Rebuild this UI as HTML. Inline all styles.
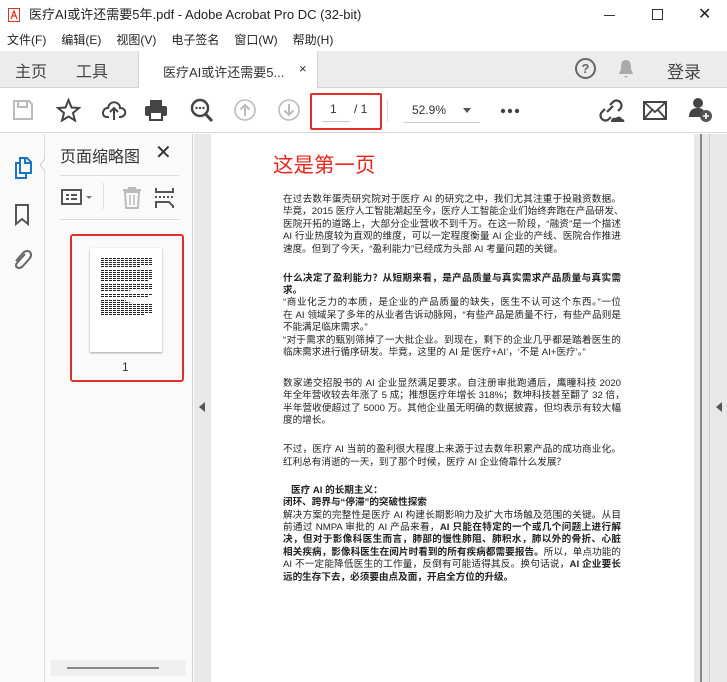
<!DOCTYPE html>
<html><head><meta charset="utf-8"><style>
*{margin:0;padding:0;box-sizing:border-box}
body{width:727px;height:682px;overflow:hidden;background:#fff;font-family:"Liberation Sans","Noto Sans CJK SC",sans-serif;position:relative;color:#222}
.abs{position:absolute}
.title{top:0;left:0;width:727px;height:30px;background:#fff;font-size:13px;line-height:30px}
.menu{top:30px;left:0;width:727px;height:21px;font-size:12px;line-height:21px;background:#fff}
.menu span{margin-left:7px;margin-right:8px}
.tabs{top:51px;left:0;width:727px;height:37px;background:#ececec;border-bottom:1px solid #d6d6d6}
.tb{top:88px;left:0;width:727px;height:45px;background:#fff;border-bottom:1px solid #d8d8d8}
.doc div{font-size:9.6px;line-height:12.4px;color:#222}
.ln{text-align:justify;text-align-last:justify;white-space:nowrap}
</style></head><body>
<div class="abs title">
 <svg class="abs" style="left:8px;top:8px" width="12" height="14"><rect x="0.5" y="0.5" width="11" height="13" fill="#fff" stroke="#d32" /><path d="M3 11 L6 3 L9 11 M4 8 H8" stroke="#d32" fill="none" stroke-width="1.2"/></svg>
 <span class="abs" style="left:29px">医疗AI或许还需要5年.pdf - Adobe Acrobat Pro DC (32-bit)</span>
 <span class="abs" style="left:604px;top:15px;width:11px;height:1px;background:#333"></span>
 <span class="abs" style="left:652px;top:9px;width:11px;height:11px;border:1px solid #333"></span>
 <span class="abs" style="left:698px;font-size:16px;line-height:30px">✕</span>
</div>
<div class="abs menu"><span>文件(F)</span><span>编辑(E)</span><span>视图(V)</span><span>电子签名</span><span>窗口(W)</span><span>帮助(H)</span></div>
<div class="abs tabs">
 <span class="abs" style="left:15px;top:7px;font-size:16px;color:#444">主页</span>
 <span class="abs" style="left:76px;top:7px;font-size:16px;color:#444">工具</span>
 <div class="abs" style="left:138px;top:0;width:180px;height:38px;background:#fff;border-left:1px solid #d6d6d6;border-right:1px solid #d6d6d6"></div>
 <span class="abs" style="left:163px;top:11px;font-size:13px;color:#333">医疗AI或许还需要5...</span>
 <span class="abs" style="left:299px;top:10px;font-size:13px;color:#333">×</span>
 <div class="abs" style="left:575px;top:7px;width:21px;height:21px;border:2px solid #666;border-radius:50%;font-size:13px;text-align:center;line-height:17px;color:#666;font-weight:bold">?</div>
 <svg class="abs" style="left:617px;top:7px" width="18" height="22"><path d="M9 2 C4 2 4 7 4 11 L2 16 H16 L14 11 C14 7 14 2 9 2Z M7 18 H11 L9 20Z" fill="#aaa"/></svg>
 <span class="abs" style="left:667px;top:7px;font-size:17px;color:#444">登录</span>
</div>
<div class="abs tb">
 <svg class="abs" style="left:12px;top:11px" width="22" height="22"><path d="M2 2H17L20 5V20H2Z" fill="none" stroke="#bbb" stroke-width="2"/><rect x="6" y="2" width="9" height="6" fill="none" stroke="#bbb" stroke-width="2"/></svg>
 <svg class="abs" style="left:56px;top:10px" width="25" height="24"><path d="M12.5 2L15.5 9.5L23 10L17 15L19 22.5L12.5 18.5L6 22.5L8 15L2 10L9.5 9.5Z" fill="none" stroke="#444" stroke-width="2"/></svg>
 <svg class="abs" style="left:101px;top:10px" width="26" height="24"><path d="M8 19H6C2 19 1 15 3 12C4 10 6 10 7 10C8 5 12 3 16 5C18 6 19 8 19 10C23 10 25 13 24 16C23 18 21 19 19 19H18" fill="none" stroke="#444" stroke-width="2"/><path d="M13 22V11M9 14L13 10L17 14" fill="none" stroke="#444" stroke-width="2"/></svg>
 <svg class="abs" style="left:144px;top:10px" width="24" height="24"><rect x="6" y="2" width="12" height="6" fill="#444"/><rect x="1" y="8" width="22" height="10" rx="2" fill="#444"/><rect x="6" y="14" width="12" height="8" fill="#fff" stroke="#444" stroke-width="2"/></svg>
 <svg class="abs" style="left:190px;top:10px" width="24" height="26"><circle cx="10" cy="10" r="8" fill="none" stroke="#444" stroke-width="2.5"/><path d="M15.5 16L22 23" stroke="#444" stroke-width="3"/><circle cx="6.5" cy="10" r="1.2" fill="#444"/><circle cx="10" cy="10" r="1.2" fill="#444"/><circle cx="13.5" cy="10" r="1.2" fill="#444"/></svg>
 <svg class="abs" style="left:234px;top:11px" width="22" height="22"><circle cx="11" cy="11" r="10" fill="none" stroke="#bbb" stroke-width="1.6"/><path d="M11 17V6M6.5 10.5L11 6L15.5 10.5" fill="none" stroke="#bbb" stroke-width="2"/></svg>
 <svg class="abs" style="left:278px;top:11px" width="22" height="22"><circle cx="11" cy="11" r="10" fill="none" stroke="#bbb" stroke-width="1.6"/><path d="M11 5V16M6.5 11.5L11 16L15.5 11.5" fill="none" stroke="#bbb" stroke-width="2"/></svg>
 <div class="abs" style="left:310px;top:5px;width:72px;height:37px;border:2px solid #e0302a;border-radius:2px"></div>
 <span class="abs" style="left:330px;top:14px;font-size:12px;color:#333">1</span>
 <span class="abs" style="left:322px;top:33px;width:28px;height:1px;background:#ccc"></span>
 <span class="abs" style="left:354px;top:14px;font-size:12px;color:#333">/ 1</span>
 <span class="abs" style="left:387px;top:12px;width:1px;height:22px;background:#ddd"></span>
 <span class="abs" style="left:412px;top:15px;font-size:12px;color:#333">52.9%</span>
 <span class="abs" style="left:463px;top:20px;border-left:4px solid transparent;border-right:4px solid transparent;border-top:5px solid #555"></span>
 <span class="abs" style="left:404px;top:34px;width:76px;height:1px;background:#ccc"></span>
 <svg class="abs" style="left:500px;top:20px" width="20" height="6"><circle cx="3" cy="3" r="2.2" fill="#444"/><circle cx="10" cy="3" r="2.2" fill="#444"/><circle cx="17" cy="3" r="2.2" fill="#444"/></svg>
 <svg class="abs" style="left:598px;top:10px" width="28" height="26"><path d="M9 14L15 8M7 11L4 14C2 16 2 19 4 21C6 23 9 23 11 21L13 19M12 7L15 4C17 2 20 2 22 4C24 6 24 9 22 11L20 13" fill="none" stroke="#444" stroke-width="2.2"/><path d="M13 24C13 20 16 19 18 20C19 18 23 18 24 21C26 21 27 23 26 24Z" fill="#444"/></svg>
 <svg class="abs" style="left:643px;top:13px" width="24" height="19"><rect x="1" y="1" width="22" height="17" fill="none" stroke="#444" stroke-width="2"/><path d="M1 1L12 11L23 1M1 18L9 9M23 18L15 9" fill="none" stroke="#444" stroke-width="1.8"/></svg>
 <svg class="abs" style="left:688px;top:9px" width="26" height="26"><circle cx="10" cy="6" r="5" fill="#444"/><path d="M1 20C1 13 5 11 10 11C13 11 15 12 16 14V20Z" fill="#444"/><circle cx="18" cy="19" r="6" fill="#555"/><path d="M18 16V22M15 19H21" stroke="#fff" stroke-width="1.6"/></svg>
</div>
<div class="abs" style="left:0;top:134px;width:45px;height:548px;background:#fafafa;border-right:1px solid #dcdcdc"></div>
<svg class="abs" style="left:13px;top:156px" width="20" height="24"><path d="M7 2H14L18 6V17H7Z M12 2V7H18" fill="none" stroke="#1a73c8" stroke-width="2"/><path d="M7 7H3V22H13V17" fill="none" stroke="#1a73c8" stroke-width="2"/></svg>
<svg class="abs" style="left:40px;top:158px" width="6" height="14"><path d="M6 0L0 7L6 14" fill="#fff" stroke="#ccc"/></svg>
<svg class="abs" style="left:14px;top:204px" width="16" height="22"><path d="M2 1H14V20L8 15L2 20Z" fill="none" stroke="#555" stroke-width="2"/></svg>
<svg class="abs" style="left:10px;top:248px" width="24" height="24"><path d="M15 6L7 15C5 17 6 20 9 20C11 20 12 19 13 18L20 10C22 7 21 3 17 3C15 3 14 4 13 5L6 13" fill="none" stroke="#666" stroke-width="2"/></svg>
<div class="abs" style="left:45px;top:134px;width:148px;height:548px;background:#fafafa;border-right:1px solid #d0d0d0"></div>
<span class="abs" style="left:60px;top:143px;font-size:16px;color:#333">页面缩略图</span>
<span class="abs" style="left:155px;top:140px;font-size:20px;color:#333">✕</span>
<span class="abs" style="left:60px;top:175px;width:119px;height:1px;background:#ddd"></span>
<svg class="abs" style="left:60px;top:187px" width="36" height="22"><rect x="2" y="3" width="19" height="14" fill="none" stroke="#555" stroke-width="2"/><rect x="6" y="7" width="3" height="2" fill="#555"/><rect x="6" y="11" width="3" height="2" fill="#555"/><path d="M11 8H17M11 12H17" stroke="#555" stroke-width="2"/><path d="M26 9H32L29 12Z" fill="#777"/></svg>
<span class="abs" style="left:103px;top:183px;width:1px;height:26px;background:#ddd"></span>
<svg class="abs" style="left:121px;top:186px" width="22" height="24"><path d="M2 4H20M8 4V2H14V4M4 6H18L17 22H5Z" fill="none" stroke="#bbb" stroke-width="2"/><path d="M9 9V19M13 9V19" stroke="#bbb" stroke-width="1.5"/></svg>
<svg class="abs" style="left:154px;top:187px" width="22" height="22"><path d="M2 1V5H19V1M2 21V15H15L19 19V21" fill="none" stroke="#555" stroke-width="2"/><path d="M1 10H21" stroke="#555" stroke-width="2" stroke-dasharray="2 2"/></svg>
<span class="abs" style="left:60px;top:219px;width:119px;height:1px;background:#ddd"></span>
<div class="abs" style="left:70px;top:234px;width:114px;height:148px;border:2px solid #e0302a;border-radius:3px"></div>
<div class="abs" style="left:90px;top:248px;width:72px;height:104px;background:#fff;box-shadow:0 1px 2px rgba(0,0,0,.35)">
 <svg width="72" height="104"><g stroke="#222" stroke-width="1" stroke-dasharray="3 1">
 <path d="M11 10.5H62M11 12.5H62M11 14.5H62M11 16.5H62M11 18.5H50"/>
 <path d="M11 22.5H62M11 24.5H62M11 26.5H62M11 28.5H62M11 30.5H62M11 32.5H58"/>
 <path d="M11 36.5H62M11 38.5H62M11 40.5H62M11 42.5H40"/>
 <path d="M11 46.5H62M11 48.5H58"/>
 <path d="M11 52.5H36M11 54.5H40M11 56.5H62M11 58.5H62M11 60.5H62M11 62.5H62M11 64.5H62M11 66.5H55"/></g></svg>
</div>
<span class="abs" style="left:122px;top:360px;font-size:12px;color:#333">1</span>
<div class="abs" style="left:51px;top:660px;width:134px;height:16px;background:#efefef"></div>
<span class="abs" style="left:67px;top:667px;width:92px;height:2px;background:#888"></span>
<div class="abs" style="left:194px;top:134px;width:533px;height:548px;background:#e8e8e8"></div>
<span class="abs" style="left:199px;top:402px;border-top:5px solid transparent;border-bottom:5px solid transparent;border-right:6px solid #555"></span>
<div class="abs" style="left:211px;top:134px;width:483px;height:548px;background:#fff"></div>
<span class="abs" style="left:700px;top:134px;width:2px;height:548px;background:#888"></span>
<span class="abs" style="left:709px;top:134px;width:1px;height:548px;background:#ccc"></span>
<span class="abs" style="left:716px;top:402px;border-top:5px solid transparent;border-bottom:5px solid transparent;border-right:6px solid #555"></span>
<div class="abs" style="left:273px;top:152px;font-size:20.5px;line-height:28px;color:#e8231c">这是第一页</div>
<div class="abs doc" style="left:283px;top:194px;width:338px">
 <div class="ln">在过去数年蛋壳研究院对于医疗 AI 的研究之中，我们尤其注重于投融资数据。</div>
 <div class="ln">毕竟，2015 医疗人工智能潮起至今，医疗人工智能企业们始终奔跑在产品研发、</div>
 <div class="ln">医院开拓的道路上，大部分企业营收不到千万。在这一阶段，“融资”是一个描述</div>
 <div class="ln">AI 行业热度较为直观的维度，可以一定程度衡量 AI 企业的产线、医院合作推进</div>
 <div>速度。但到了今天，“盈利能力”已经成为头部 AI 考量问题的关键。</div>
 <div style="height:16.6px"></div>
 <div class="ln" style="font-weight:bold">什么决定了盈利能力？从短期来看，是产品质量与真实需求产品质量与真实需</div>
 <div style="font-weight:bold">求。</div>
 <div class="ln">“商业化乏力的本质，是企业的产品质量的缺失，医生不认可这个东西。”一位</div>
 <div class="ln">在 AI 领域呆了多年的从业者告诉动脉网，“有些产品是质量不行，有些产品则是</div>
 <div>不能满足临床需求。”</div>
 <div class="ln">“对于需求的甄别筛掉了一大批企业。到现在，剩下的企业几乎都是踏着医生的</div>
 <div>临床需求进行循序研发。毕竟，这里的 AI 是‘医疗+AI’，‘不是 AI+医疗’。”</div>
 <div style="height:18.6px"></div>
 <div class="ln">数家递交招股书的 AI 企业显然满足要求。自注册审批跑通后，鹰瞳科技 2020</div>
 <div class="ln">年全年营收较去年涨了 5 成；推想医疗年增长 318%；数坤科技甚至翻了 32 倍，</div>
 <div class="ln">半年营收便超过了 5000 万。其他企业虽无明确的数据披露，但均表示有较大幅</div>
 <div>度的增长。</div>
 <div style="height:16.6px"></div>
 <div class="ln">不过，医疗 AI 当前的盈利很大程度上来源于过去数年积累产品的成功商业化。</div>
 <div>红利总有消逝的一天，到了那个时候，医疗 AI 企业倚靠什么发展？</div>
 <div style="height:15.6px"></div>
 <div style="font-weight:bold;padding-left:8px">医疗 AI 的长期主义：</div>
 <div style="font-weight:bold">闭环、跨界与“停滞”的突破性探索</div>
 <div class="ln">解决方案的完整性是医疗 AI 构建长期影响力及扩大市场触及范围的关键。从目</div>
 <div class="ln">前通过 NMPA 审批的 AI 产品来看，<b>AI 只能在特定的一个或几个问题上进行解</b></div>
 <div class="ln"><b>决，但对于影像科医生而言，肺部的慢性肺阻、肺积水，肺以外的骨折、心脏</b></div>
 <div class="ln"><b>相关疾病，影像科医生在阅片时看到的所有疾病都需要报告。</b>所以，单点功能的</div>
 <div class="ln">AI 不一定能降低医生的工作量，反倒有可能适得其反。换句话说，<b>AI 企业要长</b></div>
 <div><b>远的生存下去，必须要由点及面，开启全方位的升级。</b></div>
</div>
</body></html>
